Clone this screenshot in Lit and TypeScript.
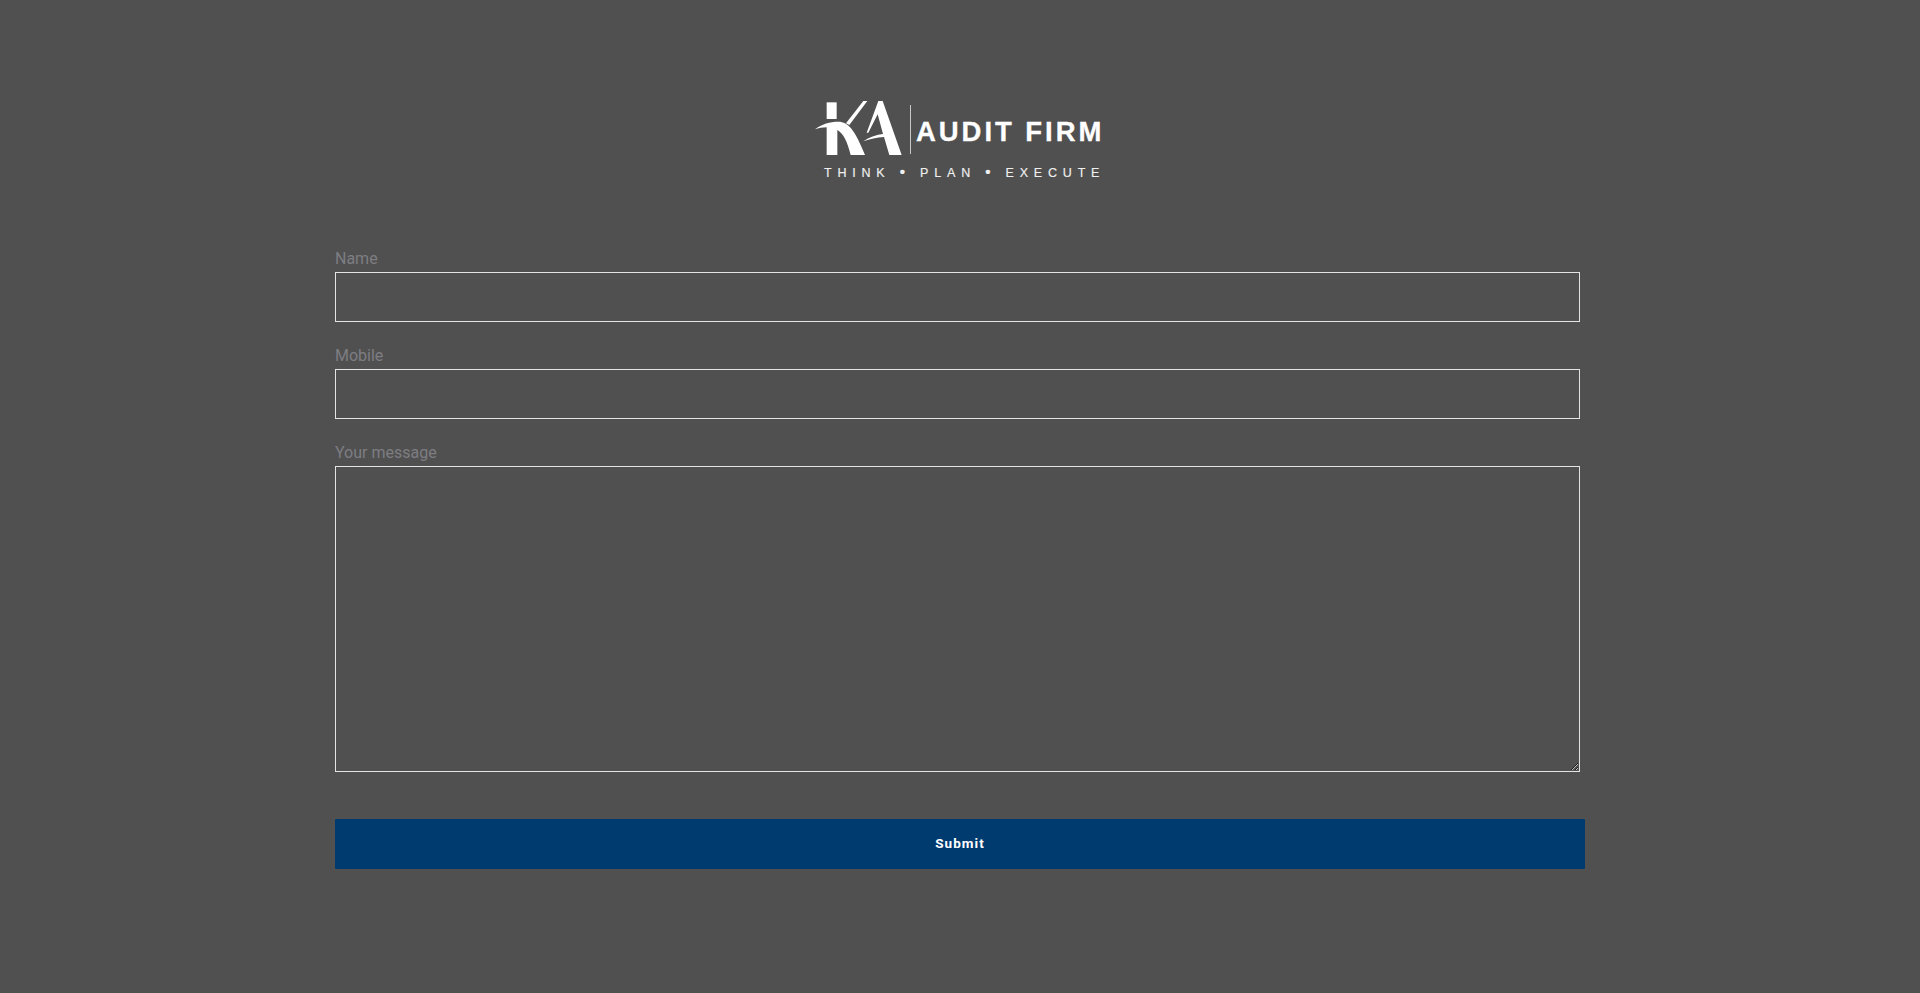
import { LitElement, html, css } from "lit";
import { customElement } from "lit/decorators.js";

@customElement("app-root")
export class AppRoot extends LitElement {
  static styles = css`
    :host { display: block; min-height: 993px; background: #505050; font-family: Roboto, "Liberation Sans", sans-serif; }
    .page { width: 1250px; margin: 0 auto; padding-top: 100px; box-sizing: border-box; }
    .logo { width: 292px; margin: 0 auto; color: #fff; font-family: "Liberation Sans", Arial, sans-serif; transform: translateX(1px); }
    .mark { display: flex; align-items: flex-end; height: 56px; }
    .ka { width: 95px; height: 56px; flex: none; display: block; }
    .sep { width: 1px; height: 49px; background: #c8c8c8; margin: 0 5px 2px 0; flex: none; }
    .firm { font-size: 27.5px; line-height: 27px; font-weight: 700; letter-spacing: 2.95px; -webkit-text-stroke: 0.3px #fff; white-space: nowrap; margin-bottom: 11px; }
    .tag { font-size: 12.5px; line-height: 14px; letter-spacing: 5.8px; white-space: nowrap; margin: 9px 0 0 9px; color: #f0f0f0; -webkit-text-stroke: 0.15px #f0f0f0; }
    .dot { font-weight: 700; font-size: 15px; line-height: 14px; }
    form { margin-top: 67px; display: flex; flex-direction: column; }
    label { display: block; font-size: 16px; line-height: 23px; color: #7d7d82; margin-bottom: 2px; }
    .field { margin-bottom: 22px; }
    input, textarea {
      display: block; width: 1245px; height: 50px; box-sizing: border-box; background: transparent;
      border: 1px solid #e4e4e4; padding: 0 10px; margin: 0; border-radius: 0; color: #fff; outline: none;
      font: 16px Roboto, sans-serif;
    }
    textarea { height: 306px; padding: 10px; resize: vertical; }
    .last { margin-bottom: 47px; }
    button {
      display: block; width: 1250px; height: 50px; border: 0; border-radius: 1px; background: #003b70; color: #fff;
      font: 700 13.5px Roboto, sans-serif; letter-spacing: 1.05px; cursor: pointer; padding: 0 0 2px;
    }
  `;

  render() {
    return html`
      <div class="page">
        <div class="logo">
          <div class="mark">
            <svg class="ka" viewBox="0 0 285 168" aria-label="KA logo">
              <g fill="#fff">
                <path d="M35 7 H65 V57 H35 Z"/>
                <path d="M0 88 C20 72 45 65 70 65 C100 65 120 90 150 165 H107 C97 125 85 100 67 90 V165 H35 V82 C23 82 10 84 0 88 Z"/>
                <path d="M93 70 L145 3 H157 L103 75 Z"/>
                <path d="M190 3 H203 L260 165 H223 L207 111 C185 112 165 117 145 124 C165 110 185 104 204 102 L188 43 L160 98 L155 98 Z"/>
              </g>
            </svg>
            <div class="sep"></div>
            <div class="firm">AUDIT FIRM</div>
          </div>
          <div class="tag">THINK <span class="dot">•</span> PLAN <span class="dot">•</span> EXECUTE</div>
        </div>
        <form @submit=${(e: Event) => e.preventDefault()}>
          <div class="field"><label for="n">Name</label><input id="n" type="text" /></div>
          <div class="field"><label for="m">Mobile</label><input id="m" type="text" /></div>
          <div class="field last"><label for="t">Your message</label><textarea id="t"></textarea></div>
          <button type="submit">Submit</button>
        </form>
      </div>
    `;
  }
}
